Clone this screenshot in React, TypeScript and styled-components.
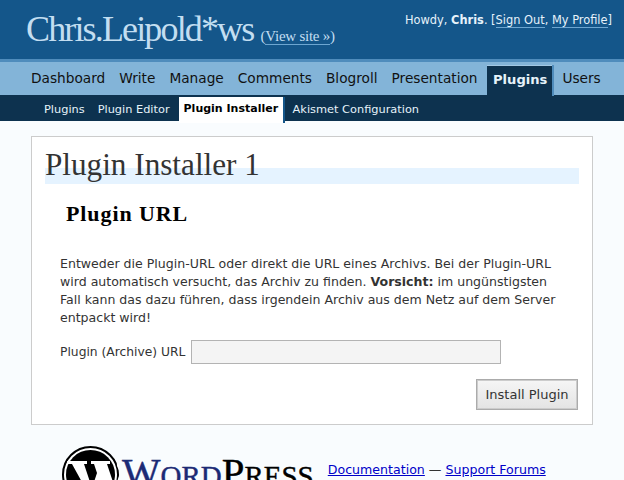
import styled, { createGlobalStyle } from 'styled-components';

const GlobalStyle = createGlobalStyle`
    html, body {
        margin: 0;
        padding: 0;
        height: 100%;
        overflow: hidden;
        background: #f9fcfe;
        font-family: "DejaVu Sans", Verdana, sans-serif;
        font-size: 12px;
        color: #333;
    }
`;

const mainTabs = ['Dashboard', 'Write', 'Manage', 'Comments', 'Blogroll', 'Presentation', 'Plugins', 'Users'];
const subTabs = ['Plugins', 'Plugin Editor', 'Plugin Installer', 'Akismet Configuration'];

const Page = styled.div`
    width: 624px;
    height: 480px;
    overflow: hidden;
`;

const Header = styled.div`
    height: 59px;
    background: #14568a;
    border-bottom: 3px solid #4f8cbc;
    display: flex;
    justify-content: space-between;
    padding: 0 12px 0 26px;
`;

const SiteTitle = styled.h1`
    margin: 10px 0 0;
    font-family: "Liberation Serif", "Times New Roman", serif;
    font-size: 36px;
    line-height: 38px;
    font-weight: normal;
    letter-spacing: -1.85px;
    color: #c3def1;
    white-space: nowrap;
`;

const ViewSite = styled.span`
    font-size: 15px;
    letter-spacing: -0.25px;
    a {
        border-bottom: 1px solid #6da6d1;
    }
`;

const UserInfo = styled.div`
    margin-top: 12px;
    font-size: 11.4px;
    line-height: 16px;
    color: #e6f2fa;
    white-space: nowrap;
    a {
        border-bottom: 1px solid #6da6d1;
    }
`;

const MainNav = styled.div`
    height: 33px;
    background: #83b4d8;
    display: flex;
    align-items: flex-end;
    padding-left: 24px;
`;

const MainTab = styled.div<{ $active?: boolean }>`
    height: 30px;
    line-height: 27px;
    padding: ${(p) => (p.$active ? '0 5px 0 6px' : '0 7px')};
    margin: ${(p) => (p.$active ? '0 3px -1px 2.5px' : '0')};
    font-size: ${(p) => (p.$active ? '13.1px' : '13.7px')};
    color: ${(p) => (p.$active ? '#e6f2fa' : '#111')};
    font-weight: ${(p) => (p.$active ? 'bold' : 'normal')};
    background: ${(p) => (p.$active ? '#0d324f' : 'transparent')};
    border-top: ${(p) => (p.$active ? '1px solid #a3c8e4' : '0')};
    box-shadow: ${(p) => (p.$active ? '2px 0 0 #4f8cbc' : 'none')};
    white-space: nowrap;
    position: relative;
`;

const SubNav = styled.div`
    height: 26px;
    background: #0d324f;
    display: flex;
    align-items: flex-start;
    padding: 2px 0 0 37.5px;
    box-sizing: border-box;
`;

const SubTab = styled.div<{ $active?: boolean }>`
    height: ${(p) => (p.$active ? '26px' : '24px')};
    line-height: 24px;
    padding: ${(p) => (p.$active ? '0 5px' : '0 6.5px')};
    margin: ${(p) => (p.$active ? '0 3px 0 2.5px' : '0')};
    font-size: ${(p) => (p.$active ? '11px' : '11.35px')};
    color: ${(p) => (p.$active ? '#000' : '#e6f2fa')};
    font-weight: ${(p) => (p.$active ? 'bold' : 'normal')};
    background: ${(p) => (p.$active ? '#fff' : 'transparent')};
    box-shadow: ${(p) => (p.$active ? '2px 0 0 #14568a' : 'none')};
    white-space: nowrap;
`;

const Wrap = styled.div`
    margin: 15px 31px 0;
    height: 289px;
    box-sizing: border-box;
    border: 1px solid #ccc;
    background: #fff;
    padding: 12px 13px 0;
`;

const Title = styled.h2`
    margin: 0;
    height: 35px;
    font-family: "Liberation Serif", "Times New Roman", serif;
    font-size: 31.2px;
    line-height: 32px;
    font-weight: normal;
    color: #333;
    background: linear-gradient(#fff 0 19px, #e5f3ff 19px 35px);
`;

const SectionTitle = styled.h3`
    margin: 18px 0 0 21px;
    font-family: "Liberation Serif", "Times New Roman", serif;
    font-size: 22px;
    letter-spacing: 0.9px;
    line-height: 24px;
    color: #000;
`;

const Intro = styled.p`
    margin: 29px 0 0 15px;
    width: 500px;
    font-size: 12.55px;
    line-height: 18px;
`;

const UrlRow = styled.div`
    margin: 13px 0 0 15px;
    display: flex;
    align-items: center;
    gap: 6px;
    font-size: 12.3px;
`;

const UrlInput = styled.input`
    width: 310px;
    height: 24px;
    box-sizing: border-box;
    border: 1px solid #b3b3b3;
    background: #f4f4f4;
    padding: 0;
`;

const Submit = styled.div`
    display: flex;
    justify-content: flex-end;
    margin: 15px 1px 0 0;
`;

const InstallButton = styled.button`
    width: 102px;
    height: 31px;
    padding: 0;
    font-family: inherit;
    font-size: 13px;
    color: #333;
    border: 2px solid #ccc;
    outline: 1px solid #ababab;
    outline-offset: -1px;
    background: linear-gradient(#f5f5f5, #e4e4e4);
`;

const Footer = styled.div`
    display: flex;
    align-items: flex-start;
    padding: 21px 0 0 62px;
    color: #333;
`;

const Logo = styled.div`
    display: flex;
    align-items: flex-start;
    gap: 3px;
    svg {
        flex: none;
    }
`;

const LogoWord = styled.div`
    margin-top: 7px;
    font-family: "Liberation Serif", "Times New Roman", serif;
    font-variant: small-caps;
    font-size: 40.8px;
    line-height: 40px;
    color: #000;
    -webkit-text-stroke: 0.4px currentColor;
    white-space: nowrap;
    span {
        color: #1c2a75;
    }
`;

const FooterLinks = styled.div`
    margin: 15px 0 0 14px;
    font-size: 12.6px;
    line-height: 18px;
    white-space: nowrap;
    a {
        color: #0000c8;
        text-decoration: underline;
    }
`;

export default function App() {
    return (
        <Page>
            <GlobalStyle />
            <Header>
                <SiteTitle>
                    Chris.Leipold*ws <ViewSite>(<a>View site »</a>)</ViewSite>
                </SiteTitle>
                <UserInfo>
                    Howdy, <strong>Chris</strong>. [<a>Sign Out</a>, <a>My Profile</a>]
                </UserInfo>
            </Header>
            <MainNav>
                {mainTabs.map((tab) => (
                    <MainTab key={tab} $active={tab === 'Plugins'}>
                        {tab}
                    </MainTab>
                ))}
            </MainNav>
            <SubNav>
                {subTabs.map((tab) => (
                    <SubTab key={tab} $active={tab === 'Plugin Installer'}>
                        {tab}
                    </SubTab>
                ))}
            </SubNav>
            <Wrap>
                <Title>Plugin Installer 1</Title>
                <SectionTitle>Plugin URL</SectionTitle>
                <Intro>
                    Entweder die Plugin-URL oder direkt die URL eines Archivs. Bei der Plugin-URL wird automatisch versucht, das Archiv zu finden.{' '}
                    <strong>Vorsicht:</strong> im ungünstigsten Fall kann das dazu führen, dass irgendein Archiv aus dem Netz auf dem Server entpackt wird!
                </Intro>
                <UrlRow>
                    <span>Plugin (Archive) URL</span>
                    <UrlInput readOnly />
                </UrlRow>
                <Submit>
                    <InstallButton>Install Plugin</InstallButton>
                </Submit>
            </Wrap>
            <Footer>
                <Logo>
                    <svg width="57" height="57" viewBox="0 0 57 57">
                        <circle cx="28.5" cy="28.5" r="27.5" fill="#fff" stroke="#000" strokeWidth="2" />
                        <circle cx="28.5" cy="28.5" r="24.5" fill="#000" />
                        <path d="M5 15h20v3h-3l8 24 5-15-3-9h-3v-3h19v3h-3l8 24 4-12c2-6-3-8-2-13 5 3 9 11 6 19l-8 20h-4l-7-20-7 20h-4L10 18H6z" fill="#fff" />
                    </svg>
                    <LogoWord>
                        <span>Word</span>Press
                    </LogoWord>
                </Logo>
                <FooterLinks>
                    <a>Documentation</a> — <a>Support Forums</a>
                </FooterLinks>
            </Footer>
        </Page>
    );
}
